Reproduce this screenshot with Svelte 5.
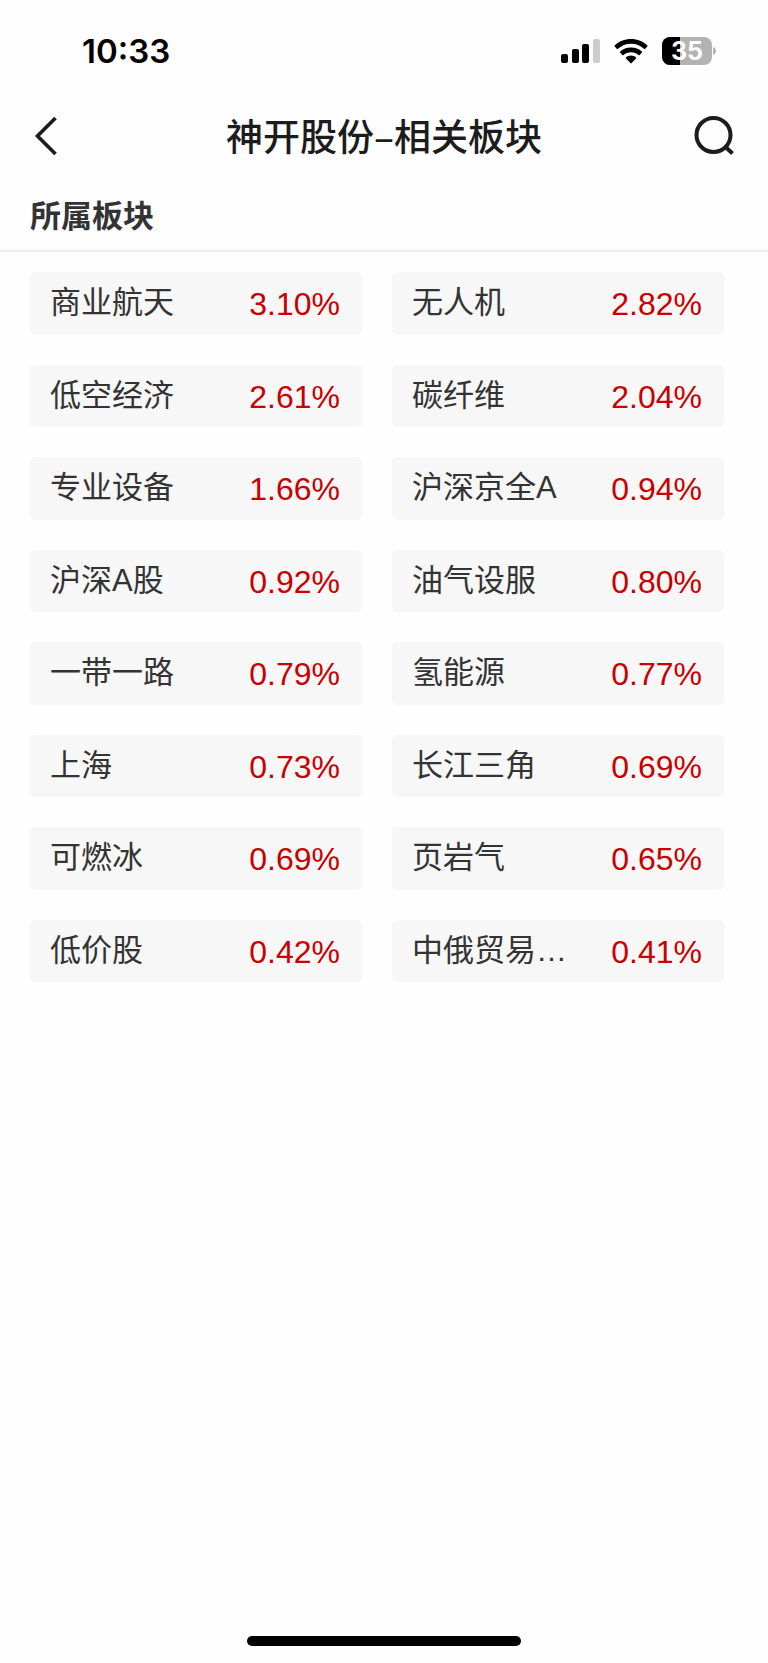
<script>
    const time = '10:33';
    const battery = 35;
    const stock = '神开股份';

    const sectors = [
        { name: '商业航天', change: 3.1 },
        { name: '无人机', change: 2.82 },
        { name: '低空经济', change: 2.61 },
        { name: '碳纤维', change: 2.04 },
        { name: '专业设备', change: 1.66 },
        { name: '沪深京全A', change: 0.94 },
        { name: '沪深A股', change: 0.92 },
        { name: '油气设服', change: 0.8 },
        { name: '一带一路', change: 0.79 },
        { name: '氢能源', change: 0.77 },
        { name: '上海', change: 0.73 },
        { name: '长江三角', change: 0.69 },
        { name: '可燃冰', change: 0.69 },
        { name: '页岩气', change: 0.65 },
        { name: '低价股', change: 0.42 },
        { name: '中俄贸易…', change: 0.41 }
    ];
</script>

<div class="screen">
    <div class="status-bar">
        <span class="time">{time}</span>
        <div class="status-icons">
            <svg class="signal" width="40" height="26" viewBox="0 0 40 26" aria-hidden="true">
                <rect x="1" y="16" width="7" height="9" rx="2" />
                <rect x="12" y="11" width="7" height="14" rx="2" />
                <rect x="22" y="6" width="7" height="19" rx="2" />
                <rect x="33" y="1" width="7" height="24" rx="2" fill="#cccccc" />
            </svg>
            <svg class="wifi" width="34" height="26" viewBox="0 -1 34 26" aria-hidden="true">
                <path d="M17 0C23.5 0 29.200 2.400 33.300 6.400Q33.800 7 33.300 7.600L31.200 9.800Q30.600 10.300 30 9.800C26.600 6.500 22 4.700 17 4.700S7.400 6.500 4 9.800Q3.400 10.300 2.800 9.800L.7 7.600Q.2 7 .7 6.400C4.800 2.400 10.500 0 17 0Z" />
                <path d="M17 8.500C21.300 8.500 25 10 27.800 12.600Q28.300 13.200 27.800 13.800L25.600 16Q25 16.500 24.400 16C22.400 14.200 19.800 13.200 17 13.200S11.600 14.200 9.600 16Q9 16.500 8.400 16L6.200 13.800Q5.700 13.200 6.200 12.600C9 10 12.700 8.500 17 8.500Z" />
                <path d="M17 16.600C19 16.600 20.700 17.300 22 18.400Q22.600 19 22 19.600L17.600 24.100Q17 24.700 16.400 24.100L12 19.600Q11.400 19 12 18.400C13.300 17.300 15 16.600 17 16.600Z" />
            </svg>
            <div class="battery">
                <div class="battery-body">
                    <div class="battery-level" style="width: {battery}%"></div>
                    <span class="battery-text">{battery}</span>
                </div>
                <svg width="3" height="8" viewBox="0 0 3 8" aria-hidden="true">
                    <path d="M0 0C4 1.500 4 6.500 0 8Z" fill="#b3b3b3" />
                </svg>
            </div>
        </div>
    </div>

    <header class="nav-bar">
        <button class="nav-btn" aria-label="返回">
            <svg width="44" height="44" viewBox="0 0 44 44" fill="none" stroke="#1c1c1c" stroke-width="3.600">
                <path d="M25.500 4L7.500 22L25.500 40" />
            </svg>
        </button>
        <h1>{stock}–相关板块</h1>
        <button class="nav-btn" aria-label="搜索">
            <svg width="44" height="44" viewBox="0 0 44 44" fill="none" stroke="#1c1c1c" stroke-width="4">
                <circle cx="19.500" cy="21" r="17" />
                <path d="M31 32.500L38.500 39.500" />
            </svg>
        </button>
    </header>

    <main>
        <h2>所属板块</h2>
        <div class="sector-grid">
            {#each sectors as sector}
                <a class="sector" href="#{sector.name}">
                    <span class="name">{sector.name}</span>
                    <span class="change">{sector.change.toFixed(2)}%</span>
                </a>
            {/each}
        </div>
    </main>

    <footer>
        <div class="home-indicator"></div>
    </footer>
</div>

<style>
    :global(body) {
        margin: 0;
        background: #fefefe;
    }

    .screen {
        min-height: 100vh;
        display: flex;
        flex-direction: column;
        font-family: 'Liberation Sans', 'Noto Sans CJK SC', sans-serif;
        color: #333333;
    }

    .status-bar {
        height: 102px;
        box-sizing: border-box;
        padding: 0 52px 0 82px;
        display: flex;
        align-items: center;
        justify-content: space-between;
        color: #000000;
    }

    .time {
        font-family: Inter, sans-serif;
        font-size: 33px;
        font-weight: 600;
        line-height: 40px;
    }

    .status-icons {
        display: flex;
        align-items: center;
        gap: 14px;
    }

    .battery {
        display: flex;
        align-items: center;
        gap: 1px;
    }

    .battery-body {
        position: relative;
        width: 50px;
        height: 28px;
        border-radius: 8px;
        overflow: hidden;
        background: #b3b3b3;
    }

    .battery-level {
        height: 100%;
        background: #000000;
    }

    .battery-text {
        position: absolute;
        inset: 0;
        font-family: Inter, sans-serif;
        font-size: 25px;
        font-weight: 700;
        line-height: 28px;
        text-align: center;
        color: #ffffff;
    }

    .nav-bar {
        height: 68px;
        padding: 0 30px;
        display: flex;
        align-items: center;
        justify-content: space-between;
    }

    .nav-btn {
        width: 44px;
        height: 44px;
        padding: 0;
        border: none;
        background: transparent;
        cursor: pointer;
    }

    .nav-btn svg {
        display: block;
    }

    h1 {
        margin: 0;
        font-family: 'Noto Sans CJK SC', sans-serif;
        font-size: 37px;
        font-weight: 500;
        line-height: 54px;
        padding-bottom: 2px;
        color: #1c1c1c;
    }

    h2 {
        margin: 0;
        padding: 24px 30px 10px;
        border-bottom: 2px solid #ededed;
        font-size: 31px;
        font-weight: 700;
        line-height: 46px;
    }

    .sector-grid {
        min-height: 710px;
        padding: 20px 44px 20px 30px;
        display: grid;
        grid-template-columns: 1fr 1fr;
        grid-auto-rows: 1fr;
        gap: 30px;
    }

    .sector {
        padding: 0 22px 0 20px;
        display: flex;
        align-items: center;
        justify-content: space-between;
        border-radius: 5px;
        background: #f7f7f7;
        font-size: 31px;
        line-height: 46px;
        color: #333333;
        text-decoration: none;
        white-space: nowrap;
    }

    .change {
        padding-top: 2px;
        font-size: 32px;
        color: #c80000;
    }

    footer {
        margin-top: auto;
        padding-bottom: 17px;
        display: flex;
        justify-content: center;
    }

    .home-indicator {
        width: 274px;
        height: 10px;
        border-radius: 5px;
        background: #000000;
    }
</style>
